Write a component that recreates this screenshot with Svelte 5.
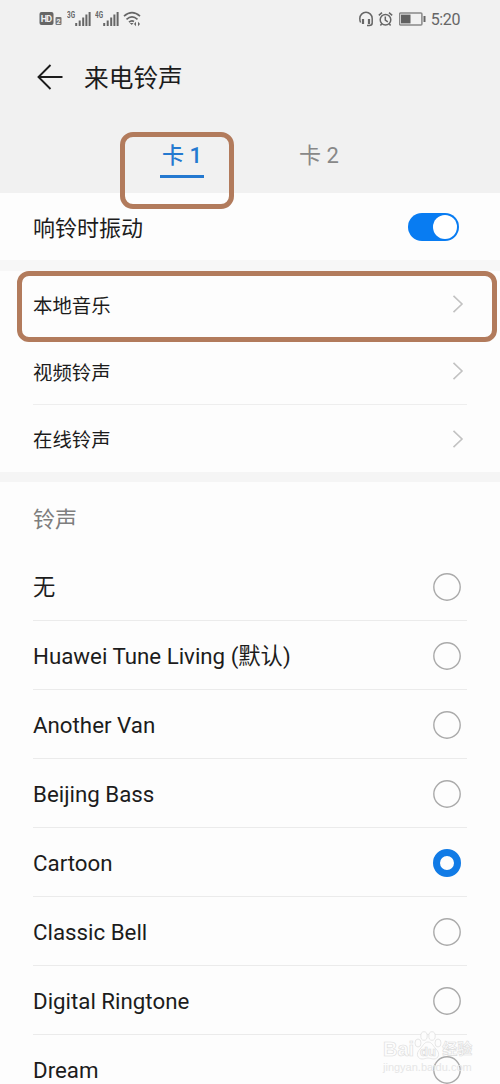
<script lang="ts">
  type Source = { label: string; highlighted?: boolean };

  const sources: Source[] = [
    { label: "本地音乐", highlighted: true },
    { label: "视频铃声" },
    { label: "在线铃声" },
  ];

  const ringtones = [
    "无",
    "Huawei Tune Living (默认)",
    "Another Van",
    "Beijing Bass",
    "Cartoon",
    "Classic Bell",
    "Digital Ringtone",
    "Dream",
  ];

  let sim = $state(1);
  let vibrate = $state(true);
  let selected = $state("Cartoon");
</script>

{#snippet signal(label: string)}
  <svg class="signal" width="24" height="18" viewBox="0 0 24 18">
    <text x="0" y="7.5" textLength="8" lengthAdjust="spacingAndGlyphs">{label}</text>
    <path d="M9.2 13v3M12.7 10.5V16M16.2 7.5V16M19.4 4.5V16M22.6 2V16" />
  </svg>
{/snippet}

<div class="screen">
  <header>
    <div class="status">
      <div class="status-left">
        <svg width="24" height="16" viewBox="0 0 24 16">
          <rect x="0.5" y="1" width="14" height="13" rx="2" fill="#666" />
          <text class="hd" x="1.7" y="11">HD</text>
          <rect x="16.5" y="6" width="6" height="8" rx="1" fill="#777" />
          <text class="slot" x="17.4" y="12.7">2</text>
        </svg>
        {@render signal("3G")}
        {@render signal("4G")}
        <svg class="wifi" width="18" height="16" viewBox="0 0 18 16">
          <path d="M1 5.2Q9-1.8 17 5.2M3.5 8.3Q9 3.5 14.5 8.3M6 11.2Q8.5 9 11 10.5" />
          <path d="M6.8 12l2 2 1.7-2zM11 13l2-2.2v4.4zM17 13l-2-2.2v4.4z" class="solid" />
        </svg>
      </div>
      <div class="status-right">
        <svg width="14" height="16" viewBox="0 0 14 16">
          <path d="M1.6 11.5Q.8 10 .8 7.5a6.2 6.2 0 0 1 12.4 0V12q0 2.5-3 2.5H8" />
          <path d="M4 8v5M10 8v5" stroke-width="2.2" />
        </svg>
        <svg width="15" height="16" viewBox="0 0 15 16">
          <circle cx="7.5" cy="8.7" r="5.3" />
          <path d="M7.3 5.5V9l2.5 1.8M.8 4.4 4 1.6M14.2 4.4 11 1.6M3.6 13l-1.2 1.5M11.4 13l1.2 1.5" />
        </svg>
        <svg class="battery" width="27" height="14" viewBox="0 0 27 14">
          <rect x=".6" y="1.1" width="22.3" height="11.8" rx="1" stroke="#888" />
          <rect x="2" y="2.6" width="9.5" height="8.8" fill="#606060" stroke="none" />
          <path d="M25.5 4v6" stroke-width="2" />
        </svg>
        <span class="time">5:20</span>
      </div>
    </div>

    <div class="title-bar">
      <button class="back" type="button" aria-label="返回">
        <svg width="27" height="26" viewBox="0 0 27 26">
          <path d="M25.5 13H1.5M13.5 1 1.5 13l12 12" />
        </svg>
      </button>
      <h1>来电铃声</h1>
    </div>

    <div class="tabs">
      {#each [1, 2] as n}
        <div class="tab-cell" class:marked={n === 1}>
          <button class="tab" class:active={sim === n} type="button" onclick={() => (sim = n)}>
            卡 {n}
          </button>
        </div>
      {/each}
    </div>
  </header>

  <div class="row vibrate">
    <span>响铃时振动</span>
    <button
      class="switch"
      class:on={vibrate}
      type="button"
      role="switch"
      aria-checked={vibrate}
      aria-label="响铃时振动"
      onclick={() => (vibrate = !vibrate)}
    ></button>
  </div>

  <div class="sources">
    {#each sources as source}
      <div class="row source" class:highlighted={source.highlighted}>
        <span>{source.label}</span>
        <svg width="12" height="20" viewBox="0 0 12 20">
          <path d="M1.5 1.8 10 10l-8.5 8.2" />
        </svg>
      </div>
    {/each}
  </div>

  <h2>铃声</h2>
  {#each ringtones as name}
    <button class="row tone" type="button" onclick={() => (selected = name)}>
      <span>{name}</span>
      <svg class="radio" class:checked={selected === name} width="28" height="28" viewBox="0 0 28 28">
        <circle cx="14" cy="14" r={selected === name ? 10.5 : 13.2} />
      </svg>
    </button>
  {/each}

  <div class="watermark">
    <div class="brand">
      <span>Bai</span>
      <svg width="28" height="30" viewBox="0 0 28 30">
        <ellipse cx="4" cy="12" rx="3" ry="4" />
        <ellipse cx="10" cy="5" rx="3.2" ry="4.3" />
        <ellipse cx="18" cy="5" rx="3.2" ry="4.3" />
        <ellipse cx="24" cy="12" rx="3" ry="4" />
        <path d="M14 11c4 0 5 4 8 7 5 5 2 10-2 10-3 0-4-1-6-1s-3 1-6 1c-4 0-7-5-2-10 3-3 4-7 8-7z" />
        <text x="6" y="25">du</text>
      </svg>
      <span class="cn">经验</span>
    </div>
    <div class="site">jingyan.baidu.com</div>
  </div>
</div>

<style>
  :global(body) {
    overflow: hidden;
    background: #fdfdfd;
  }
  .screen {
    position: relative;
    width: 500px;
    height: 1084px;
    overflow: hidden;
    background: #fdfdfd;
    color: #1c1c1c;
    font-family: Roboto, "Noto Sans CJK SC", sans-serif;
  }
  svg {
    display: block;
    flex: none;
    fill: none;
  }
  button {
    border: 0;
    padding: 0;
    background: none;
    color: inherit;
    font: inherit;
    cursor: pointer;
  }
  header {
    height: 193px;
    background: #f1f1f1;
  }
  .status {
    display: flex;
    justify-content: space-between;
    height: 38px;
    padding: 0 40px 0 39px;
    align-items: center;
    box-sizing: border-box;
  }
  .status-left,
  .status-right {
    display: flex;
    align-items: center;
  }
  .status-left {
    gap: 4px;
  }
  .status-right {
    gap: 5px;
    stroke: #666;
    stroke-width: 1.5;
  }
  .hd {
    fill: #f1f1f1;
    font-size: 9px;
    font-weight: 700;
    letter-spacing: -0.8px;
  }
  .slot {
    fill: #f1f1f1;
    font-size: 7px;
    font-weight: 700;
  }
  .signal text {
    fill: #666;
    font-size: 8.5px;
    font-weight: 700;
  }
  .signal path {
    stroke: #666;
    stroke-width: 2;
  }
  .wifi path {
    stroke: #666;
    stroke-width: 1.7;
  }
  .wifi .solid {
    fill: #666;
    stroke: none;
  }
  .battery {
    margin-left: 1px;
  }
  .time {
    padding-top: 2px;
    color: #666;
    stroke: none;
    font-size: 16px;
    line-height: 20px;
    letter-spacing: -0.4px;
  }
  .title-bar {
    display: flex;
    align-items: center;
    gap: 20px;
    height: 78px;
    padding-left: 37px;
  }
  .back {
    stroke: #1c1c1c;
    stroke-width: 1.9;
  }
  h1 {
    margin: 0;
    padding-bottom: 2px;
    font-size: 24.7px;
    font-weight: 400;
  }
  .tabs {
    display: flex;
    gap: 28px;
    padding: 16px 0 0 120px;
  }
  .tab-cell {
    display: flex;
    justify-content: center;
    width: 114px;
    height: 77px;
    box-sizing: border-box;
    padding-top: 6px;
  }
  /* The outline hangs past the header into the first row. */
  .tab-cell.marked {
    position: relative;
    padding: 1px 0 0 10px;
    border: 5px solid #b27b5c;
    border-radius: 13px;
  }
  .tab {
    width: 44px;
    height: 40px;
    color: #888;
    font-size: 22px;
    line-height: 34px;
    padding-bottom: 5px;
    white-space: nowrap;
  }
  .tab.active {
    border-bottom: 3px solid #2479d0;
    color: #2479d0;
    font-weight: 500;
    line-height: 36px;
    padding-bottom: 1px;
  }
  .row {
    display: flex;
    align-items: center;
    justify-content: space-between;
    box-sizing: border-box;
  }
  .vibrate {
    height: 67px;
    padding: 0 41px 0 33px;
    font-size: 22px;
  }
  .vibrate span {
    padding-bottom: 2px;
  }
  .switch {
    display: flex;
    align-items: center;
    width: 51px;
    height: 28px;
    padding: 2px;
    box-sizing: border-box;
    border-radius: 14px;
    background: #ccc;
  }
  .switch::after {
    content: "";
    width: 24px;
    height: 24px;
    border-radius: 50%;
    background: #fff;
  }
  .switch.on {
    justify-content: flex-end;
    background: #087cf2;
  }
  .sources {
    border-top: 11px solid #f7f7f7;
    border-bottom: 10px solid #f5f5f5;
  }
  .source {
    height: 67px;
    margin: 0 33px;
    padding: 0 3px 0 0;
    font-size: 19.4px;
    stroke: #c2c2c2;
    stroke-width: 1.6;
  }
  .source span {
    stroke: none;
  }
  .source + .source:not(:last-child) {
    border-bottom: 1px solid #eee;
  }
  .source.highlighted {
    height: 71px;
    margin: 0 3px -4px 17px;
    padding: 0 28px 5px 11px;
    border: 5px solid #b27b5c;
    border-radius: 12px;
  }
  h2 {
    display: flex;
    align-items: center;
    height: 70px;
    margin: 0 0 0 33px;
    color: #7e7e7e;
    font-size: 22px;
    font-weight: 400;
  }
  .tone {
    width: 434px;
    height: 69px;
    margin-left: 33px;
    padding: 1px 6px 0 0;
    border-bottom: 1px solid #ebebeb;
    font-size: 22.3px;
    line-height: 26px;
    text-align: left;
  }
  .radio {
    stroke: #aaa;
    stroke-width: 1.4;
  }
  .radio.checked {
    stroke: #117be6;
    stroke-width: 7;
  }
  .watermark {
    position: absolute;
    left: 383px;
    top: 1030px;
    color: #fdfdfd;
    font-family: "Liberation Sans", "Noto Sans CJK SC", sans-serif;
    -webkit-text-stroke: 0.6px #dcdcdc;
    pointer-events: none;
  }
  .brand {
    display: flex;
    align-items: flex-end;
    height: 31px;
    font-size: 20px;
    font-weight: 700;
    line-height: 24px;
  }
  .brand svg {
    fill: #fdfdfd;
    stroke: #dcdcdc;
    stroke-width: 0.7;
  }
  .brand text {
    font-size: 13px;
    -webkit-text-stroke: 0;
  }
  .cn {
    font-size: 15px;
  }
  .site {
    color: #e6e6e6;
    font-size: 11px;
    line-height: 12px;
    -webkit-text-stroke: 0;
  }
</style>
